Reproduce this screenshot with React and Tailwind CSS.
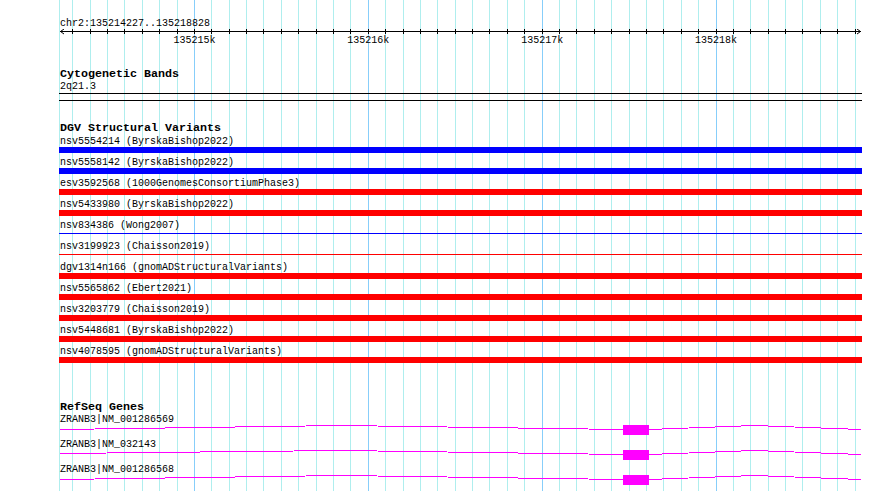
import React from "react";

const START = 135214227;
const END = 135218828;
const LEFT = 60;
const SCALE = 800 / (END - START);
const toX = (pos) => LEFT + (pos - START) * SCALE;

const gridLines = [];
for (let p = 135214300; p <= END; p += 100) {
    gridLines.push({ x: toX(p), major: p % 1000 === 0 });
}

const majors = [135215000, 135216000, 135217000, 135218000];

const variants = [
    { name: "nsv5554214 (ByrskaBishop2022)", color: "blue", thin: false },
    { name: "nsv5558142 (ByrskaBishop2022)", color: "blue", thin: false },
    { name: "esv3592568 (1000GenomesConsortiumPhase3)", color: "red", thin: false },
    { name: "nsv5433980 (ByrskaBishop2022)", color: "red", thin: false },
    { name: "nsv834386 (Wong2007)", color: "blue", thin: true },
    { name: "nsv3199923 (Chaisson2019)", color: "red", thin: true },
    { name: "dgv1314n166 (gnomADStructuralVariants)", color: "red", thin: false },
    { name: "nsv5565862 (Ebert2021)", color: "red", thin: false },
    { name: "nsv3203779 (Chaisson2019)", color: "red", thin: false },
    { name: "nsv5448681 (ByrskaBishop2022)", color: "red", thin: false },
    { name: "nsv4078595 (gnomADStructuralVariants)", color: "red", thin: false },
];

const genes = [
    { name: "ZRANB3|NM_001286569", leftY: 4.5 },
    { name: "ZRANB3|NM_032143", leftY: 3.5 },
    { name: "ZRANB3|NM_001286568", leftY: 4.5 },
];

const Title = ({ children, className = "" }) => (
    <div className={"pl-px pt-px text-[11.67px] font-bold leading-[13px] text-black whitespace-pre " + className}>
        {children}
    </div>
);

const Label = ({ children }) => (
    <div className="pl-px pt-px h-[13px] text-[10px] leading-[13px] text-black whitespace-pre">{children}</div>
);

const VariantRow = ({ v }) => (
    <div className="pb-[2px]">
        <Label>{v.name}</Label>
        {v.thin ? (
            <div className="h-[6px] pt-[2px]">
                <div className={v.color === "blue" ? "h-px bg-[#0000ff]" : "h-px bg-[#ff0000]"} />
            </div>
        ) : (
            <div className={v.color === "blue" ? "h-[6px] bg-[#0000ff]" : "h-[6px] bg-[#ff0000]"} />
        )}
    </div>
);

const GeneRow = ({ g }) => (
    <div>
        <Label>{g.name}</Label>
        <svg width="803" height="12" className="block" shapeRendering="crispEdges">
            <polyline
                points={`1,${g.leftY} 282.5,0.5 564,4.5`}
                fill="none"
                stroke="#ff00ff"
                strokeWidth="1"
            />
            <rect x="564" y="0" width="26" height="10" fill="#ff00ff" />
            <polyline
                points="590,4.5 695.5,0.5 802,4.5"
                fill="none"
                stroke="#ff00ff"
                strokeWidth="1"
            />
        </svg>
    </div>
);

export default function App() {
    return (
        <div className="relative w-[890px] h-[491px] bg-white overflow-hidden font-['Liberation_Mono',monospace]">
            {/* grid behind the tracks */}
            <svg className="absolute inset-0" width="890" height="491" shapeRendering="crispEdges">
                <line x1="59.5" y1="0" x2="59.5" y2="491" stroke="#afeeee" />
                {gridLines.map((g, i) => (
                    <line
                        key={i}
                        x1={Math.floor(g.x) + 0.5}
                        y1="0"
                        x2={Math.floor(g.x) + 0.5}
                        y2="491"
                        stroke={g.major ? "#87cefa" : "#afeeee"}
                    />
                ))}
            </svg>

            <div className="relative ml-[59px] w-[803px]">
                {/* ruler */}
                <div className="pt-[16px]">
                    <Label>chr2:135214227..135218828</Label>
                </div>
                <div className="relative h-[18px]">
                    <svg width="803" height="6" className="block" shapeRendering="crispEdges">
                        <line x1="1" y1="2.5" x2="802" y2="2.5" stroke="#000" />
                        {gridLines.map((g, i) => (
                            <line
                                key={i}
                                x1={Math.floor(g.x) - 59 + 0.5}
                                y1="0"
                                x2={Math.floor(g.x) - 59 + 0.5}
                                y2="5"
                                stroke="#000"
                            />
                        ))}
                        <polyline points="5,0 1.5,2.5 5,5" fill="none" stroke="#000" shapeRendering="auto" />
                        <polyline points="798,0 801.5,2.5 798,5" fill="none" stroke="#000" shapeRendering="auto" />
                    </svg>
                    {majors.map((m) => (
                        <div
                            key={m}
                            className="absolute top-[5px] w-[42px] text-center text-[10px] leading-[13px] text-black"
                            style={{ left: toX(m) - 59 - 21 }}
                        >
                            {m / 1000 + "k"}
                        </div>
                    ))}
                </div>

                {/* cytogenetic bands */}
                <Title className="mt-[20px] h-[12px]">Cytogenetic Bands</Title>
                <Label>2q21.3</Label>
                <div className="mt-px h-[8px] border-y border-black" />

                {/* DGV */}
                <Title className="mt-[20px] h-[13px]">DGV Structural Variants</Title>
                {variants.map((v) => (
                    <VariantRow key={v.name} v={v} />
                ))}

                {/* RefSeq */}
                <Title className="mt-[35px] h-[12px]">RefSeq Genes</Title>
                {genes.map((g) => (
                    <GeneRow key={g.name} g={g} />
                ))}
            </div>
        </div>
    );
}
